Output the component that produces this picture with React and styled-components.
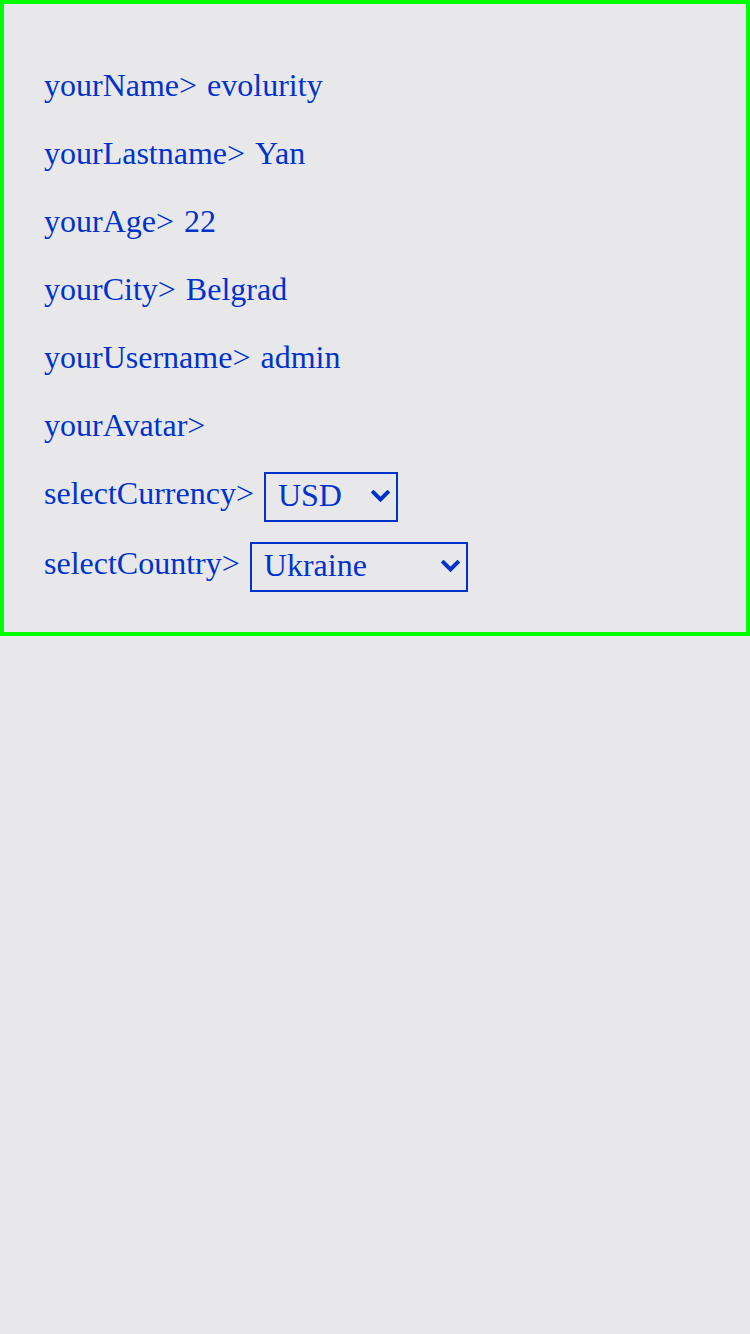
import React from "react";
import styled, { createGlobalStyle } from "styled-components";

const Global = createGlobalStyle`
  html, body {
    margin: 0;
    padding: 0;
    background: #e8e8ea;
  }
  body {
    font-family: "Liberation Serif", "Times New Roman", serif;
  }
  * { box-sizing: border-box; }
`;

const Panel = styled.div`
  border: 4px solid #00ff00;
  padding: 57px 40px 40px;
  display: flex;
  flex-direction: column;
  gap: 20px;
  color: #0033cc;
  font-family: "Liberation Serif", "Times New Roman", serif;
  font-size: 32px;
`;

const Row = styled.div`
  display: flex;
  align-items: baseline;
  gap: 10px;
  line-height: 48px;
  min-height: 48px;
`;

const SelectRow = styled.div`
  display: flex;
  align-items: flex-start;
  gap: 10px;
  margin-top: ${(p) => p.$top || 0}px;
`;

const Label = styled.span``;
const Value = styled.span``;

const SelectLabel = styled.span`
  line-height: 36px;
  padding-top: 3px;
`;

const SelectWrap = styled.span`
  position: relative;
  display: inline-flex;
`;

const Select = styled.select`
  appearance: none;
  -webkit-appearance: none;
  width: ${(p) => p.$w}px;
  height: 50px;
  border: 2px solid #0033cc;
  border-radius: 0;
  background: transparent;
  color: #0033cc;
  font-family: "Liberation Serif", "Times New Roman", serif;
  font-size: 32px;
  padding: 0 0 4px 12px;
  margin: 0;
  outline: none;
`;

const Chevron = styled.svg`
  position: absolute;
  right: 8px;
  top: 18px;
  width: 19px;
  height: 13px;
  pointer-events: none;
`;

const Dropdown = ({ width, value, options }) => (
  <SelectWrap>
    <Select $w={width} defaultValue={value}>
      {options.map((o) => (
        <option key={o}>{o}</option>
      ))}
    </Select>
    <Chevron viewBox="0 0 19 13">
      <path d="M2.5 2.5 L9.5 9.5 L16.5 2.5" fill="none" stroke="#0033cc" strokeWidth="4" strokeLinecap="square" strokeLinejoin="miter" />
    </Chevron>
  </SelectWrap>
);

const fields = [
  ["yourName>", "evolurity"],
  ["yourLastname>", "Yan"],
  ["yourAge>", "22"],
  ["yourCity>", "Belgrad"],
  ["yourUsername>", "admin"],
  ["yourAvatar>", ""],
];

export default function App() {
  return (
    <>
      <Global />
      <Panel>
        {fields.map(([l, v]) => (
          <Row key={l}>
            <Label>{l}</Label>
            {v && <Value>{v}</Value>}
          </Row>
        ))}
        <SelectRow $top={3}>
          <SelectLabel>selectCurrency&gt;</SelectLabel>
          <Dropdown width={134} value="USD" options={["USD", "EUR", "UAH"]} />
        </SelectRow>
        <SelectRow>
          <SelectLabel>selectCountry&gt;</SelectLabel>
          <Dropdown width={218} value="Ukraine" options={["Ukraine", "Serbia", "Poland"]} />
        </SelectRow>
      </Panel>
    </>
  );
}
